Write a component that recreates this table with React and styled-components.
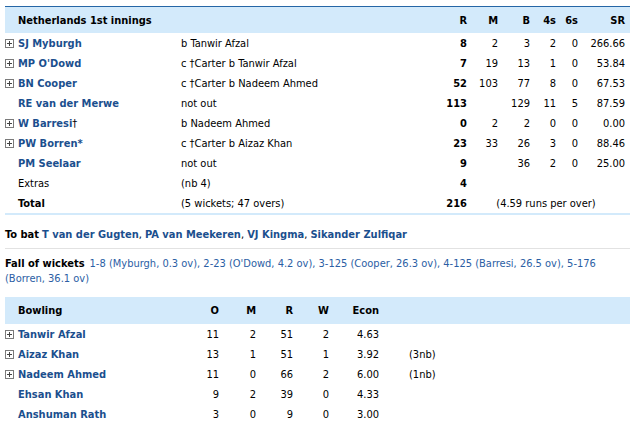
import React from "react";
import styled, { createGlobalStyle } from "styled-components";

const GlobalStyle = createGlobalStyle`
  html, body { margin: 0; padding: 0; background: #fff; }
  body {
    font-family: "DejaVu Sans Condensed", "DejaVu Sans", Verdana, sans-serif;
    font-size: 11px;
    color: #000;
    -webkit-font-smoothing: antialiased;
  }
`;

const BAT_COLS = "13px 163px 246px 40px 31px 32px 26px 22px 47px 5px";
const BOWL_COLS = "13px 162px 39px 37px 37px 36px 50px 30px 221px";

const Page = styled.div`
  width: 625px;
  padding: 6px 5px 0 5px;
`;

const Table = styled.div`
  border-top: ${(p) => (p.$topLine ? "1px solid #2566a6" : "none")};
  margin-top: ${(p) => p.$mt || 0}px;
`;

const HeaderRow = styled.div`
  display: grid;
  grid-template-columns: ${(p) => p.$cols};
  height: ${(p) => p.$h || 26}px;
  align-items: center;
  background: #d3eafb;
  font-weight: bold;
`;

const Row = styled.div`
  display: grid;
  grid-template-columns: ${(p) => p.$cols};
  height: 20px;
  align-items: center;
  border-bottom: ${(p) => (p.$underline ? "2px solid #d3eafb" : "none")};
`;

const Cell = styled.div`
  text-align: ${(p) => p.$align || "left"};
  font-weight: ${(p) => (p.$bold ? "bold" : "inherit")};
  grid-column: ${(p) => p.$span || "auto"};
  white-space: nowrap;
`;

const Name = styled.span`
  color: #1b4f8e;
  font-weight: bold;
`;

const Dagger = styled.span`
  font-weight: normal;
  color: #000;
`;

const IconCell = styled.div`
  display: flex;
  align-items: center;
  height: 100%;
`;

const PlusBox = () => (
  <svg width="9" height="9" viewBox="0 0 9 9">
    <rect x="0.5" y="0.5" width="8" height="8" fill="#fff" stroke="#7a7a7a" />
    <path d="M2 4.5h5M4.5 2v5" stroke="#444" strokeWidth="1" />
  </svg>
);

const ToBat = styled.div`
  padding: 13px 0 6px 0;
  line-height: 14px;
  border-bottom: 1px solid #e2e2e2;
`;

const Label = styled.span`
  font-weight: bold;
  margin-right: 3px;
`;

const Fow = styled.div`
  padding-top: 7px;
  line-height: 15px;
  color: #2b5ea4;
`;

const FowLabel = styled.span`
  font-weight: bold;
  color: #000;
  margin-right: 5px;
`;

const FowLine = styled.span`
  white-space: nowrap;
`;

const batting = [
  { n: "SJ Myburgh", plus: true, d: "b Tanwir Afzal", r: "8", m: "2", b: "3", f: "2", s: "0", sr: "266.66" },
  { n: "MP O'Dowd", plus: true, d: "c \u2020Carter b Tanwir Afzal", r: "7", m: "19", b: "13", f: "1", s: "0", sr: "53.84" },
  { n: "BN Cooper", plus: true, d: "c \u2020Carter b Nadeem Ahmed", r: "52", m: "103", b: "77", f: "8", s: "0", sr: "67.53" },
  { n: "RE van der Merwe", plus: false, d: "not out", r: "113", m: "", b: "129", f: "11", s: "5", sr: "87.59" },
  { n: "W Barresi", suffix: "\u2020", plus: true, d: "b Nadeem Ahmed", r: "0", m: "2", b: "2", f: "0", s: "0", sr: "0.00" },
  { n: "PW Borren*", plus: true, d: "c \u2020Carter b Aizaz Khan", r: "23", m: "33", b: "26", f: "3", s: "0", sr: "88.46" },
  { n: "PM Seelaar", plus: false, d: "not out", r: "9", m: "", b: "36", f: "2", s: "0", sr: "25.00" },
];

const bowling = [
  { n: "Tanwir Afzal", plus: true, o: "11", m: "2", r: "51", w: "2", e: "4.63", x: "" },
  { n: "Aizaz Khan", plus: true, o: "13", m: "1", r: "51", w: "1", e: "3.92", x: "(3nb)" },
  { n: "Nadeem Ahmed", plus: true, o: "11", m: "0", r: "66", w: "2", e: "6.00", x: "(1nb)" },
  { n: "Ehsan Khan", plus: false, o: "9", m: "2", r: "39", w: "0", e: "4.33", x: "" },
  { n: "Anshuman Rath", plus: false, o: "3", m: "0", r: "9", w: "0", e: "3.00", x: "" },
];

export default function App() {
  return (
    <Page>
      <GlobalStyle />
      <Table $topLine>
        <HeaderRow $cols={BAT_COLS}>
          <Cell />
          <Cell>Netherlands 1st innings</Cell>
          <Cell />
          <Cell $align="right">R</Cell>
          <Cell $align="right">M</Cell>
          <Cell $align="right">B</Cell>
          <Cell $align="right">4s</Cell>
          <Cell $align="right">6s</Cell>
          <Cell $align="right">SR</Cell>
          <Cell />
        </HeaderRow>
        {batting.map((p) => (
          <Row key={p.n} $cols={BAT_COLS}>
            <IconCell>{p.plus && <PlusBox />}</IconCell>
            <Cell>
              <Name>{p.n}</Name>
              {p.suffix && <Dagger>{p.suffix}</Dagger>}
            </Cell>
            <Cell>{p.d}</Cell>
            <Cell $align="right" $bold>{p.r}</Cell>
            <Cell $align="right">{p.m}</Cell>
            <Cell $align="right">{p.b}</Cell>
            <Cell $align="right">{p.f}</Cell>
            <Cell $align="right">{p.s}</Cell>
            <Cell $align="right">{p.sr}</Cell>
            <Cell />
          </Row>
        ))}
        <Row $cols={BAT_COLS}>
          <Cell />
          <Cell>Extras</Cell>
          <Cell>(nb 4)</Cell>
          <Cell $align="right" $bold>4</Cell>
        </Row>
        <Row $cols={BAT_COLS} $underline>
          <Cell />
          <Cell $bold>Total</Cell>
          <Cell>(5 wickets; 47 overs)</Cell>
          <Cell $align="right" $bold>216</Cell>
          <Cell $span="5 / 10" $align="center">(4.59 runs per over)</Cell>
        </Row>
      </Table>

      <ToBat>
        <Label>To bat</Label>
        <Name>T van der Gugten</Name>, <Name>PA van Meekeren</Name>, <Name>VJ Kingma</Name>, <Name>Sikander Zulfiqar</Name>
      </ToBat>

      <Fow>
        <FowLabel>Fall of wickets</FowLabel>
        <FowLine>1-8 (Myburgh, 0.3 ov), 2-23 (O'Dowd, 4.2 ov), 3-125 (Cooper, 26.3 ov), 4-125 (Barresi, 26.5 ov), 5-176</FowLine>
        <br />
        <FowLine>(Borren, 36.1 ov)</FowLine>
      </Fow>

      <Table $mt={11}>
        <HeaderRow $cols={BOWL_COLS} $h={27}>
          <Cell />
          <Cell>Bowling</Cell>
          <Cell $align="right">O</Cell>
          <Cell $align="right">M</Cell>
          <Cell $align="right">R</Cell>
          <Cell $align="right">W</Cell>
          <Cell $align="right">Econ</Cell>
          <Cell />
          <Cell />
        </HeaderRow>
        {bowling.map((b) => (
          <Row key={b.n} $cols={BOWL_COLS}>
            <IconCell>{b.plus && <PlusBox />}</IconCell>
            <Cell><Name>{b.n}</Name></Cell>
            <Cell $align="right">{b.o}</Cell>
            <Cell $align="right">{b.m}</Cell>
            <Cell $align="right">{b.r}</Cell>
            <Cell $align="right">{b.w}</Cell>
            <Cell $align="right">{b.e}</Cell>
            <Cell />
            <Cell>{b.x}</Cell>
          </Row>
        ))}
      </Table>
    </Page>
  );
}
